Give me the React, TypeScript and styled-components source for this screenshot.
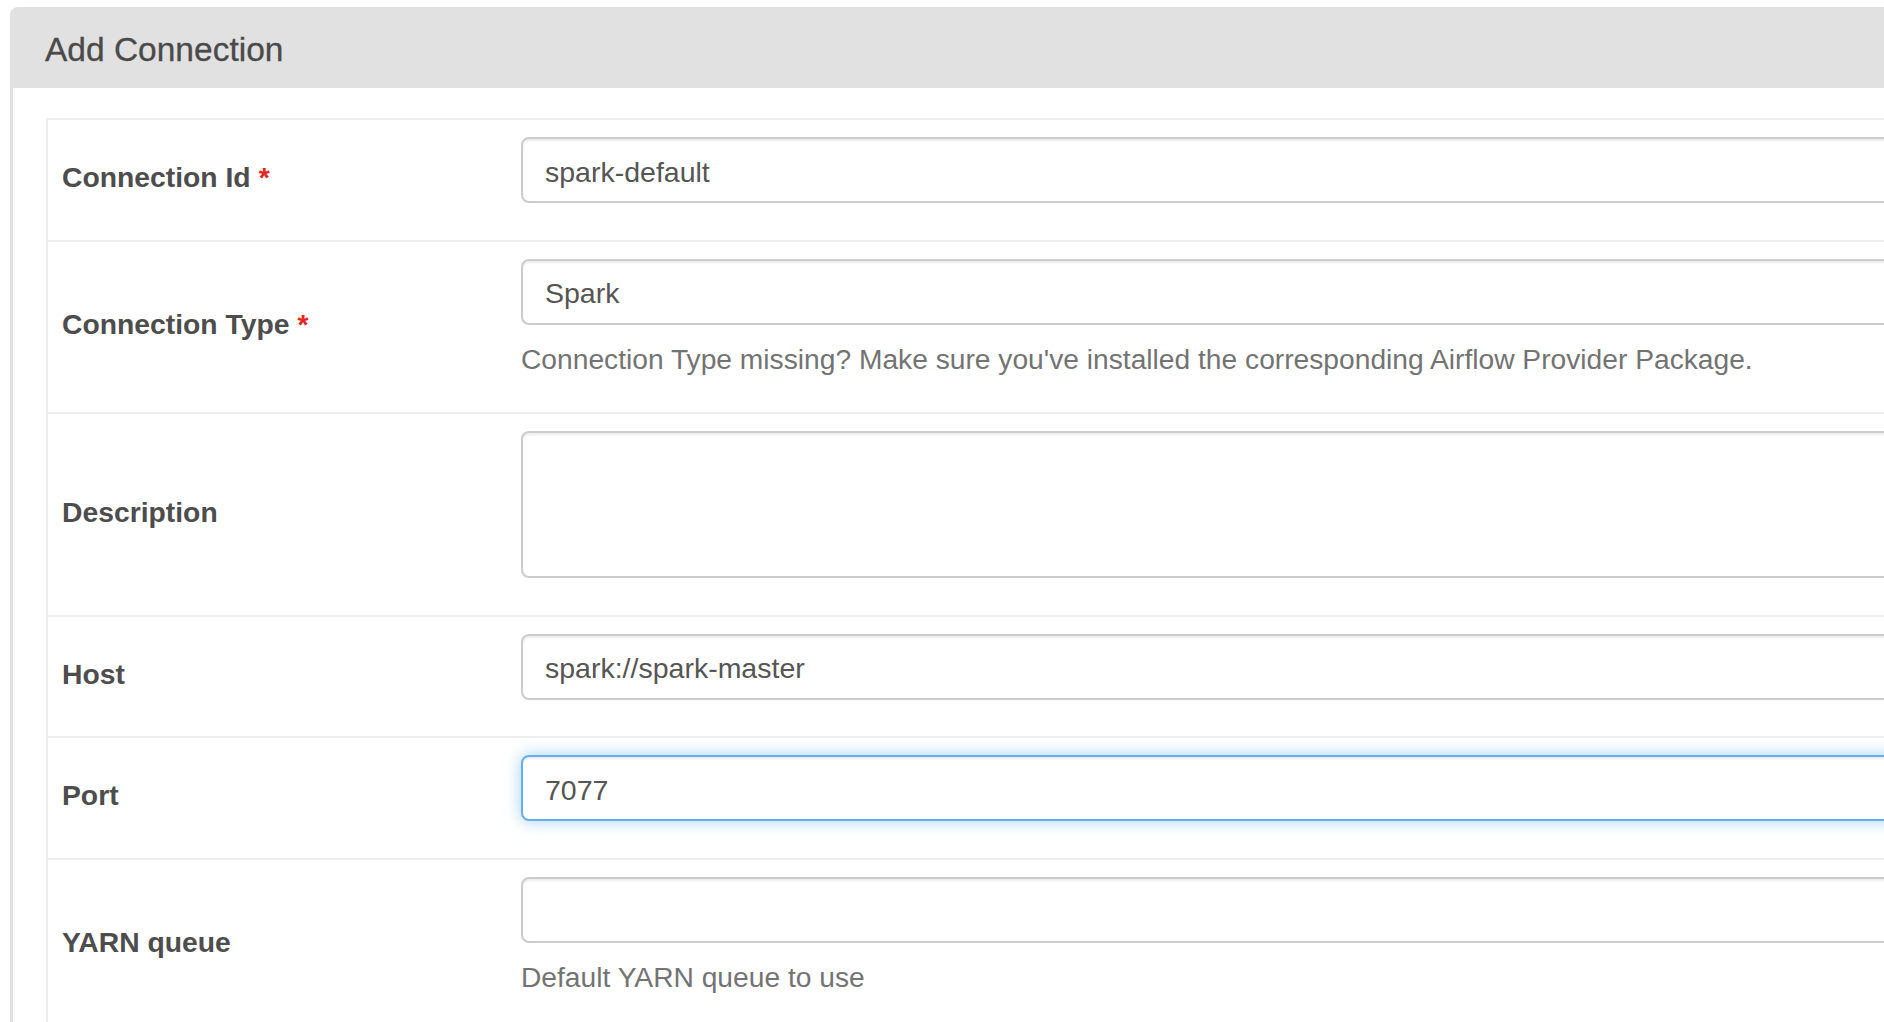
import React from 'react';
import styled, {createGlobalStyle, css} from 'styled-components';

const GlobalStyle = createGlobalStyle`
  html, body {
    margin: 0;
    padding: 0;
    overflow: hidden;
    background: #ffffff;
  }

  body {
    font-family: "Liberation Sans", Helvetica, Arial, sans-serif;
    color: #555555;
  }
`;

const Page = styled.div`
  padding: 7px 0 0 10px;
`;

const Panel = styled.section`
  width: 2400px;

  border: 3px solid #e1e1e1;
  border-bottom: none;
  border-radius: 8px 8px 0 0;
`;

const PanelHeading = styled.header`
  display: flex;
  align-items: center;

  height: 78px;
  padding: 2px 32px 0;
  box-sizing: border-box;

  font-size: 33.5px;
  color: #4a4a4a;
  -webkit-text-stroke: 0.3px #4a4a4a;

  background: #e1e1e1;
`;

const PanelBody = styled.div`
  padding: 30px 30px 0 33px;
`;

const FormTable = styled.div`
  border-top: 2px solid #eeeeee;
  border-left: 2px solid #eeeeee;
`;

const Row = styled.div`
  display: grid;
  grid-template-columns: 457px 1fr;

  border-bottom: 2px solid #eeeeee;
`;

const LabelCell = styled.label`
  display: flex;
  align-items: center;

  padding: 0 14px 4px;

  font-size: 28.3px;
  font-weight: bold;
  color: #4d4d4d;
`;

const Required = styled.span`
  margin-left: 8px;
  color: #e3261f;
`;

const FieldCell = styled.div`
  display: flex;
  flex-direction: column;

  padding: 17px 16px 36.5px;
`;

const fieldBase = css<{$focused?: boolean}>`
  box-sizing: border-box;
  width: 100%;

  padding: 0 22px;

  font-family: inherit;
  font-size: 28.5px;
  color: #555555;

  background: #ffffff;
  border: 2px solid ${({$focused}) => $focused ? `#66afe9` : `#cccccc`};
  border-radius: 8px;
  box-shadow: ${({$focused}) => $focused
    ? `inset 0 2px 2px rgba(0, 0, 0, 0.075), 0 0 16px rgba(102, 175, 233, 0.6)`
    : `inset 0 2px 2px rgba(0, 0, 0, 0.075)`};
  outline: none;
`;

const Input = styled.input<{$focused?: boolean}>`
  ${fieldBase}
  height: 66px;
  padding-top: 4px;
`;

const TextArea = styled.textarea<{$focused?: boolean}>`
  ${fieldBase}
  display: block;
  height: 147px;
  padding-top: 12px;
  resize: none;
`;

const HelpBlock = styled.span`
  margin-top: 14px;
  margin-bottom: -3px;

  font-size: 28.2px;
  line-height: 40px;
  color: #737373;
`;

interface Field {
  label: string,
  required?: boolean,
  value?: string,
  multiline?: boolean,
  focused?: boolean,
  help?: string,
}

const fields: Field[] = [
  {label: `Connection Id`, required: true, value: `spark-default`},
  {label: `Connection Type`, required: true, value: `Spark`, help: `Connection Type missing? Make sure you've installed the corresponding Airflow Provider Package.`},
  {label: `Description`, multiline: true},
  {label: `Host`, value: `spark://spark-master`},
  {label: `Port`, value: `7077`, focused: true},
  {label: `YARN queue`, value: ``, help: `Default YARN queue to use`},
];

const App: React.FunctionComponent = () => {
  return (
    <Page>
      <GlobalStyle />
      <Panel>
        <PanelHeading>Add Connection</PanelHeading>
        <PanelBody>
          <FormTable>
            {fields.map((field) => (
              <Row key={field.label}>
                <LabelCell>
                  {field.label}
                  {field.required && <Required>*</Required>}
                </LabelCell>
                <FieldCell>
                  {field.multiline
                    ? <TextArea defaultValue="" />
                    : <Input type="text" defaultValue={field.value ?? ``} $focused={field.focused} />}
                  {field.help && <HelpBlock>{field.help}</HelpBlock>}
                </FieldCell>
              </Row>
            ))}
          </FormTable>
        </PanelBody>
      </Panel>
    </Page>
  );
};

export default App;
